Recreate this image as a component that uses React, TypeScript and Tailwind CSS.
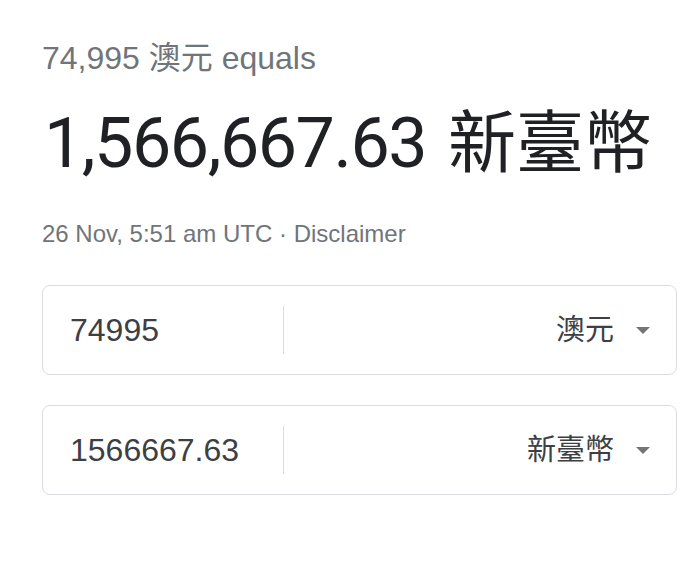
import React from 'react';

const sans = "font-['Liberation_Sans','Noto_Sans_CJK_TC',sans-serif]";

// Small grey caret used by the currency pickers
const Caret: React.FC = () => (
  <svg width="14" height="7" viewBox="0 0 14 7" className="shrink-0">
    <path d="M0 0h14L7 7z" fill="#757575" />
  </svg>
);

type RowProps = { amount: string; currency: string };

const ConverterRow: React.FC<RowProps> = ({ amount, currency }) => (
  <div className="flex h-[90px] items-center rounded-[8px] border border-[#dadce0]">
    <div className="w-[240px] pl-[27px] text-[32px] leading-none text-[#3c4043]">{amount}</div>
    <div className="h-[48px] w-px bg-[#dadce0]" />
    <div className="flex flex-1 items-center justify-end gap-[22px] pr-[26px]">
      <span className="text-[29px] leading-none text-[#3c4043]">{currency}</span>
      <Caret />
    </div>
  </div>
);

export default function App() {
  return (
    <div className={`h-[582px] w-[700px] bg-white pl-[42px] pr-[23px] pt-[40px] ${sans}`}>
      <div className="text-[32px] leading-[36px] text-[#70757a]">74,995 澳元 equals</div>

      <div className="mt-[22px] flex items-baseline text-[70px] leading-[80px] text-[#202124]">
        <span className="ml-[2px] font-['Roboto',sans-serif] tracking-[-1.5px]">1,566,667.63</span>
        <span className="ml-[22px] font-['Noto_Sans_CJK_TC',sans-serif] text-[68px]">新臺幣</span>
      </div>

      <div className="mt-[37px] text-[24px] leading-[28px] text-[#70757a]">
        26 Nov, 5:51 am UTC · <span>Disclaimer</span>
      </div>

      <div className="mt-[37px] flex flex-col gap-[30px]">
        <ConverterRow amount="74995" currency="澳元" />
        <ConverterRow amount="1566667.63" currency="新臺幣" />
      </div>
    </div>
  );
}
